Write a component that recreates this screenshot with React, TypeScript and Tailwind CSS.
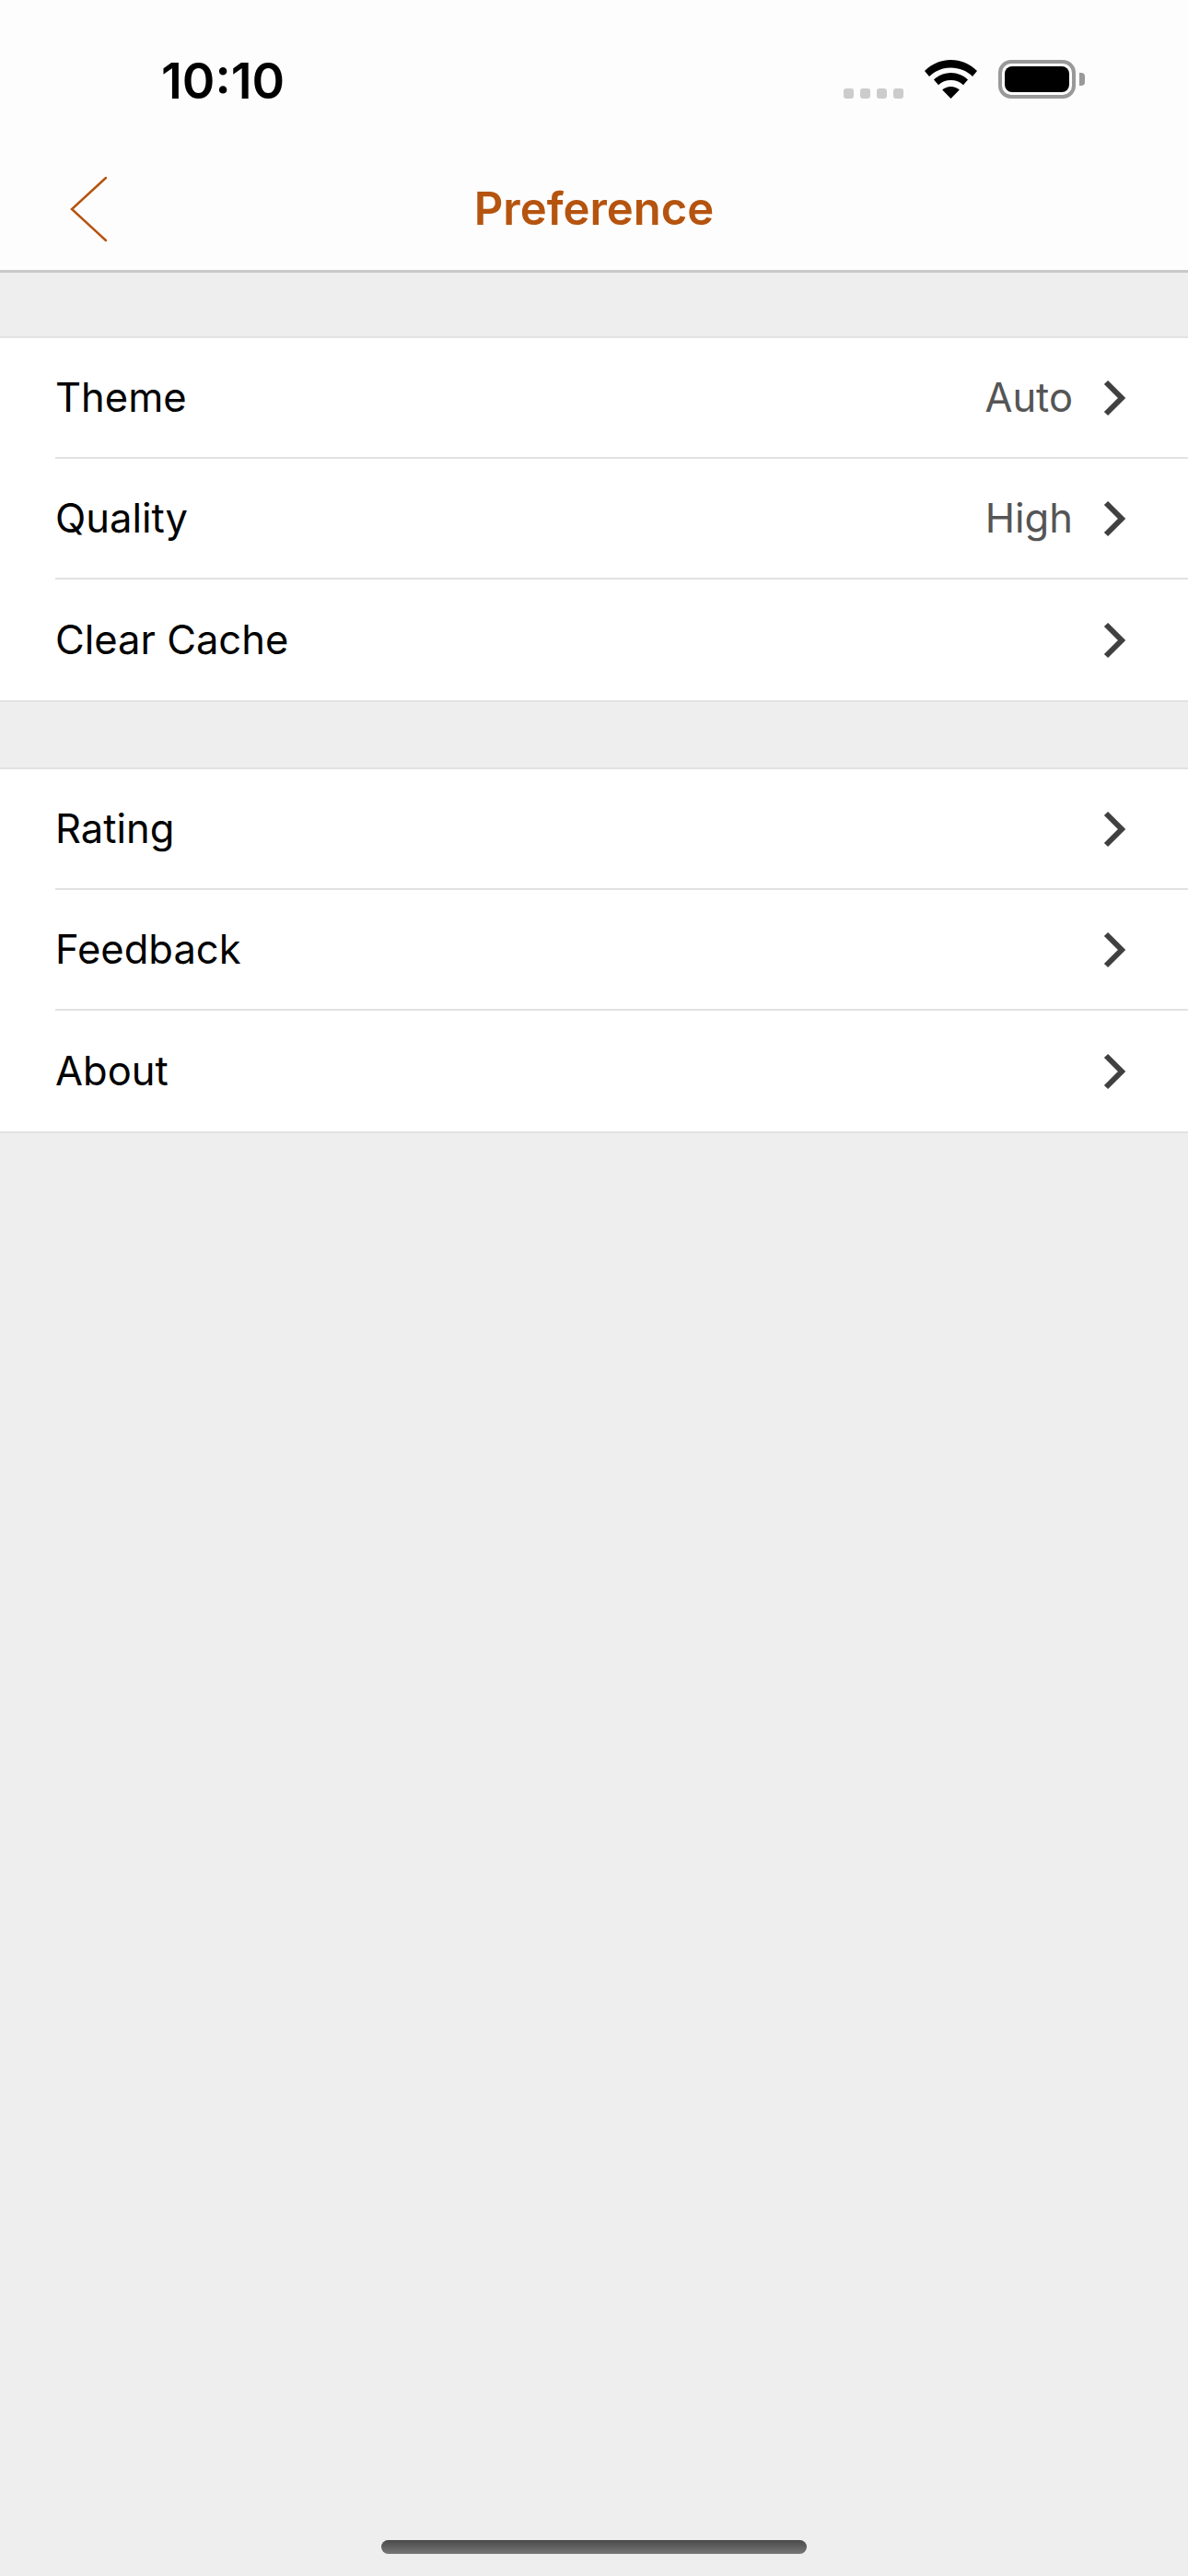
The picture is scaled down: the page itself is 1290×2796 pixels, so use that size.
const font = { fontFamily: "Inter, 'Liberation Sans', sans-serif" }

const groups = [
  [
    { label: 'Theme', value: 'Auto' },
    { label: 'Quality', value: 'High' },
    { label: 'Clear Cache' },
  ],
  [{ label: 'Rating' }, { label: 'Feedback' }, { label: 'About' }],
]

function Chevron() {
  return (
    <svg width="26" height="40" viewBox="0 0 26 40" fill="none" className="shrink-0">
      <path d="M3 3l17 17L3 37" stroke="#404040" strokeWidth="6" />
    </svg>
  )
}

function StatusBar() {
  return (
    <div className="flex h-[176px] items-start justify-between pl-[175px] pr-[112px]">
      <span className="mt-[60px] text-[54px] leading-[56px] font-semibold text-black">10:10</span>
      <div className="mt-[65px] flex items-end">
        <div className="mr-[23px] flex gap-[7px]">
          <span className="h-[11px] w-[11px] rounded-[3px] bg-[#cccccc]" />
          <span className="h-[11px] w-[11px] rounded-[3px] bg-[#cccccc]" />
          <span className="h-[11px] w-[11px] rounded-[3px] bg-[#cccccc]" />
          <span className="h-[11px] w-[11px] rounded-[3px] bg-[#cccccc]" />
        </div>
        <svg width="57" height="42" viewBox="0 0 57 42" className="mr-[23px]">
          <path d="M28.5 0C18 0 8 4 0 12l5 6c6.300-6 14.500-9.500 23.500-9.500S46 12 52 18l5-6C49 4 39 0 28.500 0z" fill="#000" />
          <path d="M28.500 14c-7 0-13.500 2.800-18.500 7.500l5 5.800c3.500-3.400 8.300-5.300 13.500-5.300s10 1.900 13.500 5.300l5-5.800C42 16.800 35.500 14 28.500 14z" fill="#000" />
          <path d="M28.500 29c-3.500 0-6.800 1.300-9.300 3.500L28.500 42l9.300-9.500C35.300 30.300 32 29 28.500 29z" fill="#000" />
        </svg>
        <div className="flex items-center">
          <div className="h-[42px] w-[84px] rounded-[14px] border-[4px] border-[#999999] p-[3px]">
            <div className="h-full w-full rounded-[8px] bg-black" />
          </div>
          <span className="ml-[4px] h-[14px] w-[6px] rounded-r-[4px] bg-[#999999]" />
        </div>
      </div>
    </div>
  )
}

function NavBar() {
  return (
    <div className="grid h-[120px] grid-cols-[1fr_auto_1fr] items-center border-b-[3px] border-[#c8c8c8] bg-[#fdfdfd] pb-[15px]">
      <svg width="40" height="72" viewBox="0 0 40 72" fill="none" className="ml-[76px]">
        <path d="M39 2L2 36l37 34" stroke="#b5540f" strokeWidth="2.500" strokeLinecap="round" />
      </svg>
      <h1 className="text-[49px] leading-[60px] font-semibold text-[#b5540f]">Preference</h1>
      <div />
    </div>
  )
}

function Row({ label, value, last }: { label: string; value?: string; last: boolean }) {
  return (
    <div className="pl-[60px]">
      <div
        className={`flex h-[131px] items-center justify-between pr-[66px] ${
          last ? '' : 'border-b-2 border-[#e2e2e2]'
        }`}
      >
        <span className="pb-[2px] text-[43.5px] leading-[52px] text-black">{label}</span>
        <div className="flex items-center gap-[33px]">
          {value && <span className="pb-[2px] text-[43.5px] leading-[52px] text-[#555555]">{value}</span>}
          <Chevron />
        </div>
      </div>
    </div>
  )
}

export default function App() {
  return (
    <div className="flex h-[2796px] w-full flex-col bg-[#eeeeee]" style={font}>
      <div className="bg-[#fdfdfd]">
        <StatusBar />
        <NavBar />
      </div>
      <div className="flex flex-col gap-[71px] pt-[69px]">
        {groups.map((rows, i) => (
          <section key={i} className="border-y-2 border-[#e2e2e2] bg-white">
            {rows.map((row, j) => (
              <Row key={row.label} label={row.label} value={row.value} last={j === rows.length - 1} />
            ))}
          </section>
        ))}
      </div>
      <div className="mt-auto flex justify-center pb-[24px]">
        <div className="h-[15px] w-[462px] rounded-[8px] bg-gradient-to-b from-[#4a4a4a] to-[#777777]" />
      </div>
    </div>
  )
}
